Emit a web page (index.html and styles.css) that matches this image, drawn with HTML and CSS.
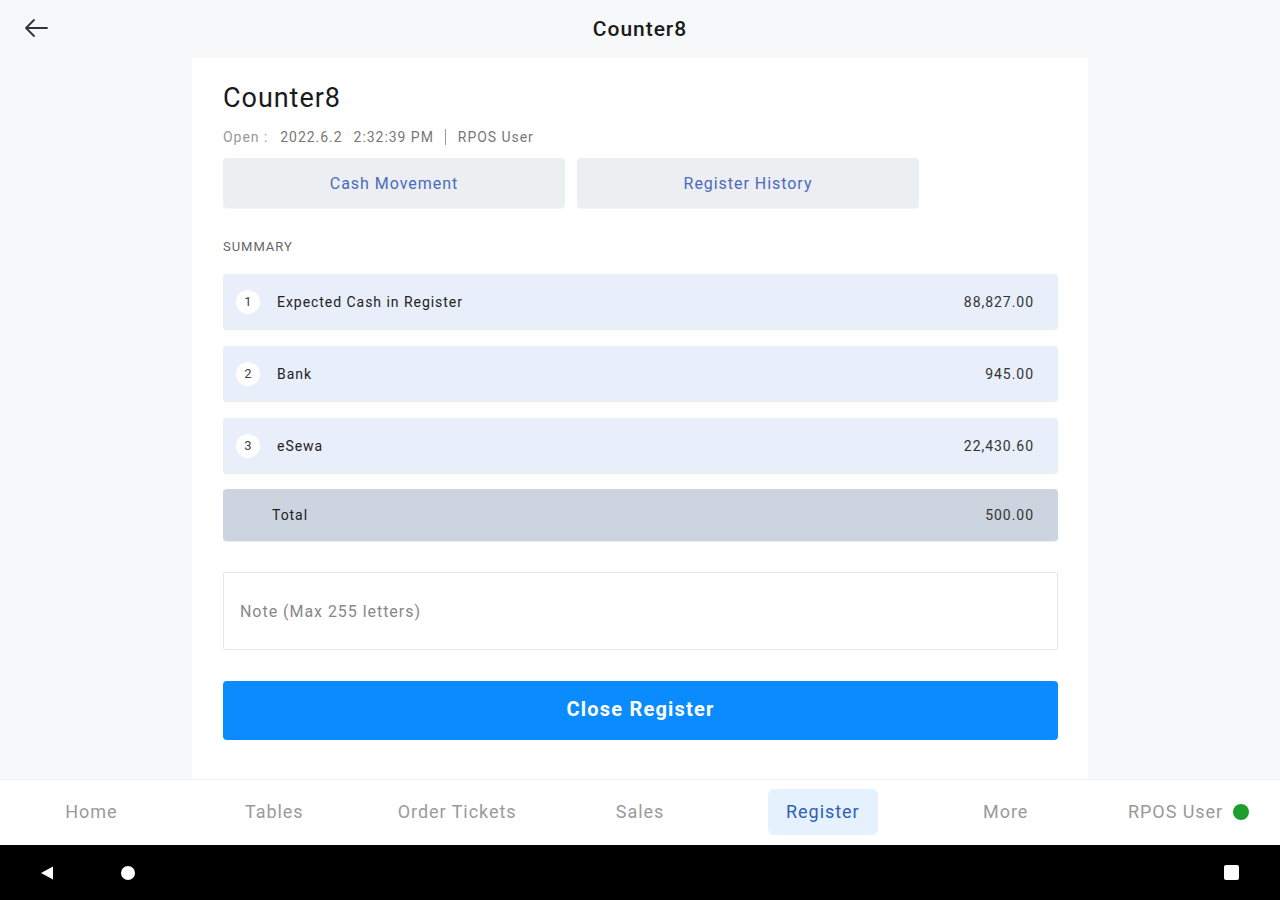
FILE: index.html
```html
<!DOCTYPE html>
<html>
<head>
<meta charset="utf-8">
<link rel="stylesheet" href="styles.css">
</head>
<body>
<div class="app">
  <header class="topbar">
    <span class="back">
      <svg width="26" height="20" viewBox="0 0 26 20"><path d="M24 10H3M11 2L3 10l8 8" fill="none" stroke="#333" stroke-width="1.8" stroke-linecap="round" stroke-linejoin="round"/></svg>
    </span>
    <h1 class="title">Counter8</h1>
  </header>
  <main class="main">
    <section class="card">
      <h2 class="name">Counter8</h2>
      <div class="meta">
        <span class="label">Open :</span>
        <span>2022.6.2</span>
        <span>2:32:39 PM</span>
        <span class="sep"></span>
        <span>RPOS User</span>
      </div>
      <div class="actions">
        <button class="act">Cash Movement</button>
        <button class="act">Register History</button>
      </div>
      <div class="section">SUMMARY</div>
      <div class="rows">
        <div class="row"><span class="num">1</span><span class="rlabel">Expected Cash in Register</span><span class="val">88,827.00</span></div>
        <div class="row"><span class="num">2</span><span class="rlabel">Bank</span><span class="val">945.00</span></div>
        <div class="row"><span class="num">3</span><span class="rlabel">eSewa</span><span class="val">22,430.60</span></div>
        <div class="row total"><span class="rlabel">Total</span><span class="val">500.00</span></div>
      </div>
      <div class="note">Note (Max 255 letters)</div>
      <button class="close">Close Register</button>
    </section>
  </main>
  <nav class="tabs">
    <span class="tab">Home</span>
    <span class="tab">Tables</span>
    <span class="tab">Order Tickets</span>
    <span class="tab">Sales</span>
    <span class="tab"><span class="active">Register</span></span>
    <span class="tab">More</span>
    <span class="tab user">RPOS User <span class="dot"></span></span>
  </nav>
  <div class="sysbar">
    <span class="sys-left">
      <svg width="16" height="16" viewBox="0 0 16 16"><path d="M14 1.5v13L2 8z" fill="#fff"/></svg>
      <svg width="14" height="14" viewBox="0 0 14 14"><circle cx="7" cy="7" r="7" fill="#fff"/></svg>
    </span>
    <svg width="15" height="15" viewBox="0 0 15 15"><rect width="15" height="15" rx="2" fill="#fff"/></svg>
  </div>
</div>
</body>
</html>
```
FILE: styles.css
```css
* { box-sizing: border-box; margin: 0; padding: 0; }
html, body { width: 1280px; height: 900px; overflow: hidden; }
body { font-family: Roboto, "Noto Sans", sans-serif; background: #f7f8fa; color: #222; letter-spacing: 0.06em; }
button { letter-spacing: 0.06em; }
.app { display: flex; flex-direction: column; height: 900px; }
.topbar { height: 58px; display: flex; align-items: center; justify-content: center; position: relative; }
.back { position: absolute; left: 23px; top: 18px; display: flex; }
.title { font-size: 21px; font-weight: 500; color: #1a1a1a; }
.main { height: 721px; display: flex; justify-content: center; overflow: hidden; }
.card { width: 896px; background: #fff; padding: 24px 30px 0 31px; }
.name { font-size: 27px; font-weight: 400; line-height: 32px; color: #1a1a1a; }
.meta { margin-top: 13px; display: flex; align-items: center; font-size: 14px; line-height: 20px; color: #777; }
.meta span { margin-right: 11px; }
.meta .label { color: #999; margin-right: 12px; }
.meta .sep { width: 1px; height: 16px; background: #999; margin-right: 12px; }
.actions { margin-top: 11px; display: flex; gap: 12px; }
.act { width: 342px; height: 50px; border: none; border-radius: 4px; background: #eceef1; color: #4b6bbd; font-family: Roboto, sans-serif; font-size: 16px; box-shadow: 0 1px 1px rgba(0,0,0,0.04); }
.section { margin-top: 30px; font-size: 13px; line-height: 18px; color: #666; }
.rows { margin-top: 18px; display: flex; flex-direction: column; gap: 17px; }
.row { height: 55px; display: flex; align-items: center; background: #e8eefa; border-radius: 4px; padding: 0 24px 0 13px; font-size: 14px; color: #222; box-shadow: 0 1px 1px rgba(0,0,0,0.08); }
.num { width: 24px; height: 24px; border-radius: 50%; background: #fff; display: flex; align-items: center; justify-content: center; font-size: 13px; color: #444; margin-right: 17px; letter-spacing: 0; }
.rlabel { flex: 1; }
.val { color: #333; }
.row.total { height: 52px; background: #cbd4df; margin-top: -1px; padding-left: 49px; }
.note { margin-top: 31px; height: 78px; border: 1px solid #e4e6e8; border-radius: 2px; display: flex; align-items: center; padding-left: 16px; font-size: 16px; color: #888; }
.close { margin-top: 31px; width: 100%; height: 59px; border: none; border-radius: 4px; background: #0a8cff; color: #fff; font-family: Roboto, sans-serif; font-size: 20px; font-weight: 700; padding-bottom: 4px; }
.tabs { height: 66px; background: #fff; display: grid; grid-template-columns: repeat(7, 1fr); align-items: center; border-top: 1px solid #eef0f2; }
.tab { display: flex; justify-content: center; align-items: center; font-size: 18px; color: #9a9a9a; padding-bottom: 2px; }
.active { width: 110px; height: 46px; display: flex; align-items: center; justify-content: center; background: #e5f1fd; border-radius: 6px; color: #2f5fb3; }
.user { color: #999; gap: 8px; }
.dot { width: 16px; height: 16px; border-radius: 50%; background: #1e9e2c; display: inline-block; margin-left: 2px; }
.sysbar { height: 55px; background: #000; display: flex; align-items: center; justify-content: space-between; padding: 0 41px 0 39px; }
.sys-left { display: flex; align-items: center; gap: 66px; }
```
